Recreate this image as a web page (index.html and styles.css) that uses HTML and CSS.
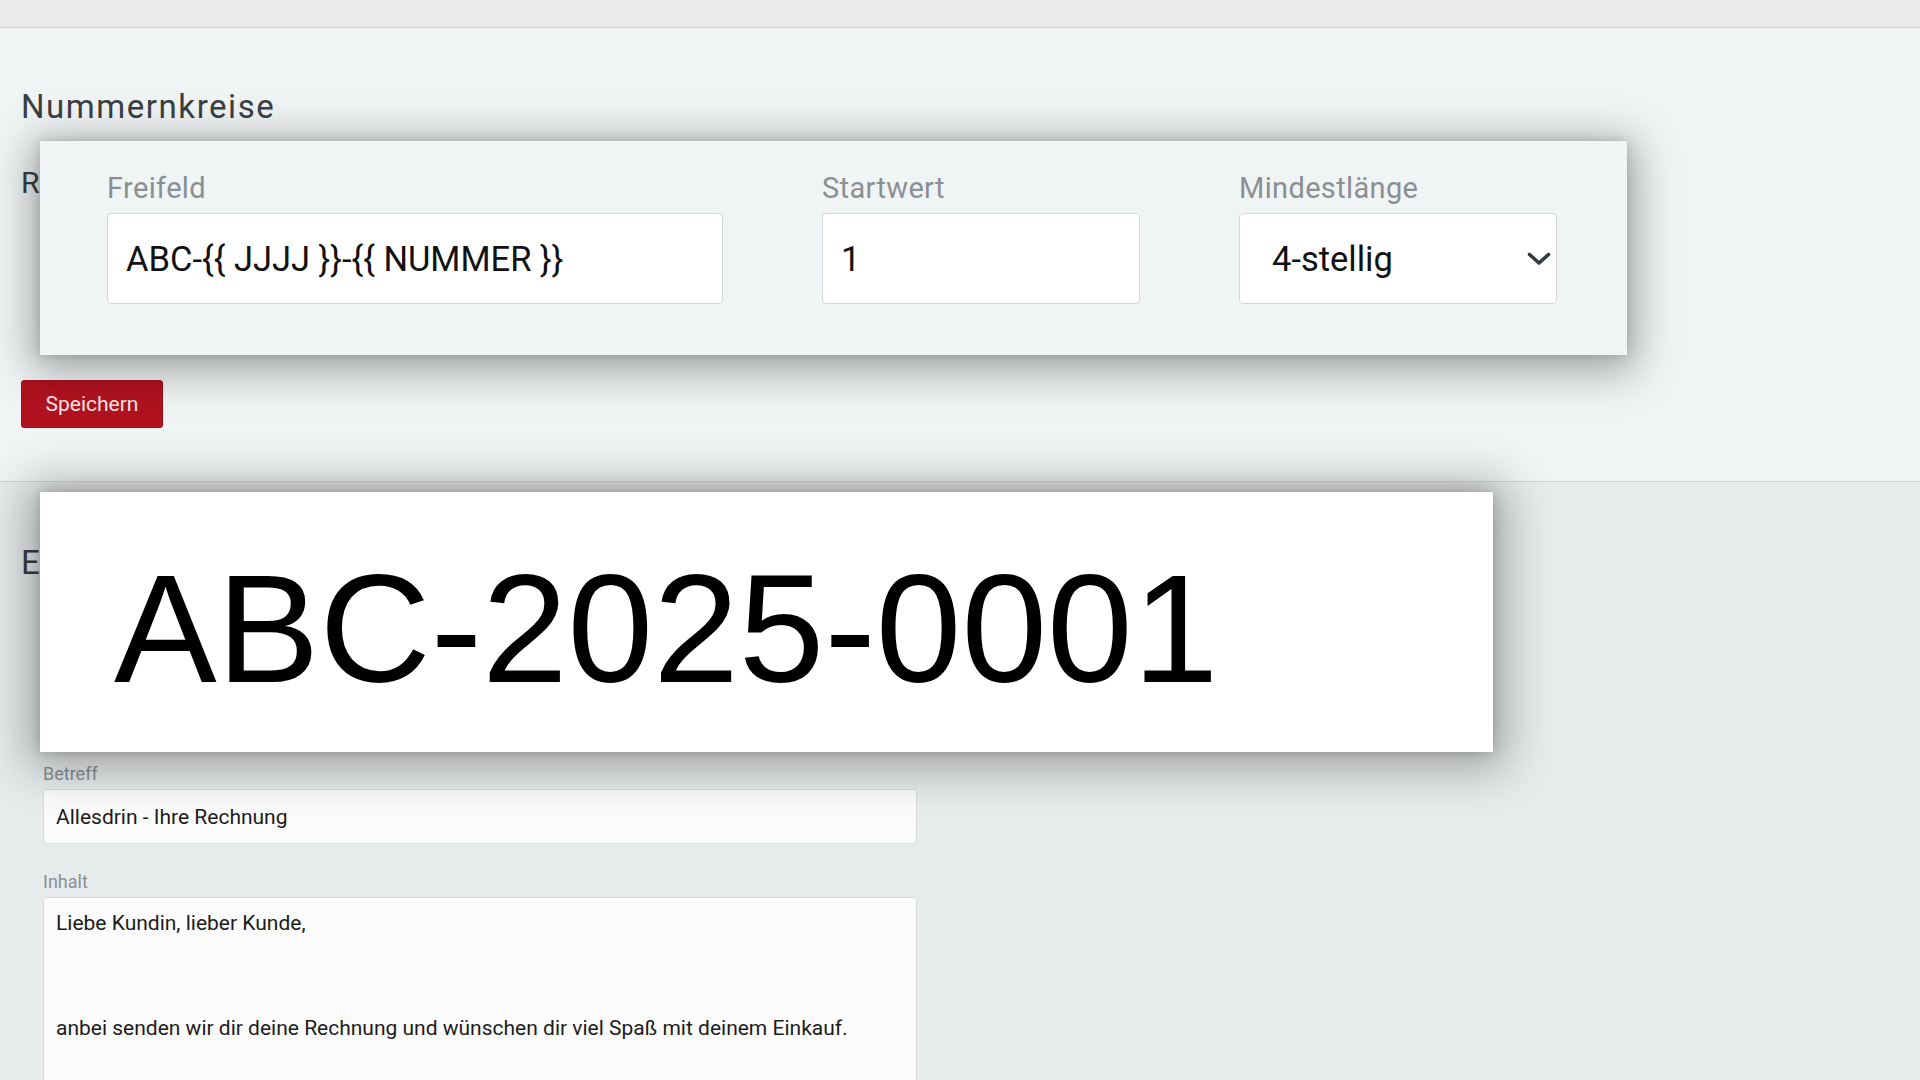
FILE: index.html
```html
<!DOCTYPE html>
<html lang="de">
<head>
<meta charset="utf-8">
<title>Nummernkreise</title>
<link rel="stylesheet" href="styles.css">
</head>
<body>
<div class="topbar"></div>

<section class="section section-numbers">
  <h2 class="section-title">Nummernkreise</h2>
  <h3 class="sub-title">Rechnungen</h3>
  <div class="form-area"></div>
  <button class="btn-primary" type="button">Speichern</button>
</section>

<section class="section section-mail">
  <h2 class="section-title">E-Mail Vorlage</h2>
  <div class="mail-panel">
    <div class="preview-area"></div>
    <label class="field-label">Betreff</label>
    <div class="text-input">Allesdrin - Ihre Rechnung</div>
    <label class="field-label label-spaced">Inhalt</label>
    <div class="text-area">
      <p>Liebe Kundin, lieber Kunde,</p>
      <p>anbei senden wir dir deine Rechnung und wünschen dir viel Spaß mit deinem Einkauf.</p>
    </div>
  </div>
</section>

<div class="zoom-card zoom-form">
  <div class="zoom-grid">
    <div class="zoom-field">
      <div class="zoom-label">Freifeld</div>
      <div class="zoom-input">ABC-{{ JJJJ }}-{{ NUMMER }}</div>
    </div>
    <div class="zoom-field">
      <div class="zoom-label">Startwert</div>
      <div class="zoom-input">1</div>
    </div>
    <div class="zoom-field">
      <div class="zoom-label">Mindestlänge</div>
      <div class="zoom-input zoom-select">
        <span>4-stellig</span>
        <svg class="chevron" width="24" height="14" viewBox="0 0 24 14"><path d="M2.5 2.5 L12 11 L21.5 2.5" fill="none" stroke="#343a3d" stroke-width="3.6" stroke-linecap="round" stroke-linejoin="round"/></svg>
      </div>
    </div>
  </div>
</div>

<div class="zoom-card zoom-preview">
  <div class="preview-number">ABC-2025-0001</div>
</div>
</body>
</html>
```

FILE: styles.css
```css
* { box-sizing: border-box; }

html, body {
  margin: 0;
  padding: 0;
}

body {
  width: 1920px;
  height: 1080px;
  overflow: hidden;
  position: relative;
  background: #e8ebec;
  font-family: Roboto, "Noto Sans", Arial, sans-serif;
  color: #1c1c1c;
}

.topbar {
  height: 28px;
  background: #e8eaeb;
  border-bottom: 1px solid #cfd6d8;
}

.section {
  padding-left: 21px;
}

.section-numbers {
  background: #f1f4f5;
  border-bottom: 1px solid #cdd4d6;
  padding-top: 59px;
  padding-bottom: 53px;
}

.section-title {
  margin: 0;
  font-size: 33px;
  line-height: 40px;
  font-weight: 400;
  color: #3a3f42;
  letter-spacing: 1.55px;
}

.sub-title {
  margin: 38px 0 0;
  font-size: 30px;
  line-height: 36px;
  font-weight: 400;
  color: #3a3f42;
}

.form-area {
  height: 150px;
  margin-bottom: 29px;
}

.btn-primary {
  display: block;
  width: 142px;
  height: 48px;
  padding: 0;
  border: 1px solid #9e0e1b;
  border-radius: 3px;
  background: #b1121f;
  color: #fbe6e8;
  font-family: Roboto, Arial, sans-serif;
  font-size: 21px;
}

.section-mail {
  padding-top: 61px;
  height: 600px;
}

.mail-panel {
  padding-left: 22px;
  width: 896px;
}

.preview-area {
  height: 181px;
}

.field-label {
  display: block;
  font-size: 18px;
  line-height: 20px;
  color: #8a8f93;
}

.label-spaced {
  margin-top: 28px;
}

.text-input {
  margin-top: 5px;
  height: 55px;
  display: flex;
  align-items: center;
  padding: 0 12px;
  background: #fbfbfb;
  border: 1px solid #d7dcde;
  border-radius: 3px;
  font-size: 21px;
  color: #1c1c1c;
}

.text-area {
  margin-top: 5px;
  height: 200px;
  padding: 8px 12px;
  background: #fbfbfb;
  border: 1px solid #d7dcde;
  border-radius: 3px;
  font-size: 21px;
  line-height: 35px;
  color: #1c1c1c;
}

.text-area p {
  margin: 0 0 70px;
}

/* Magnified overlay cards */
.zoom-card {
  position: absolute;
  left: 40px;
}

.zoom-form {
  top: 141px;
  width: 1587px;
  height: 214px;
  background: #f1f4f5;
  padding: 31px 0 0 67px;
  box-shadow: 0 8px 40px 8px rgba(0, 0, 0, 0.34), 0 0 10px rgba(0, 0, 0, 0.15);
}

.zoom-grid {
  display: grid;
  grid-template-columns: 616px 318px 318px;
  column-gap: 99px;
}

.zoom-label {
  font-size: 29px;
  line-height: 32px;
  color: #8a8f93;
  letter-spacing: 0.35px;
}

.zoom-input {
  margin-top: 9px;
  height: 91px;
  display: flex;
  align-items: center;
  padding: 0 18px;
  background: #fff;
  border: 1px solid #d3d9db;
  border-radius: 4px;
  font-size: 34.5px;
  color: #111;
}

.zoom-select {
  justify-content: space-between;
  padding: 0 5px 0 32px;
}

.chevron {
  display: block;
}

.zoom-preview {
  top: 492px;
  width: 1453px;
  height: 260px;
  background: #fff;
  padding: 60px 0 0 74px;
  box-shadow: 0 4px 44px 12px rgba(0, 0, 0, 0.32), 0 0 10px rgba(0, 0, 0, 0.18);
}

.preview-number {
  font-family: "Liberation Sans", Arial, sans-serif;
  font-size: 154px;
  line-height: 1;
  color: #000;
  white-space: nowrap;
}
```
